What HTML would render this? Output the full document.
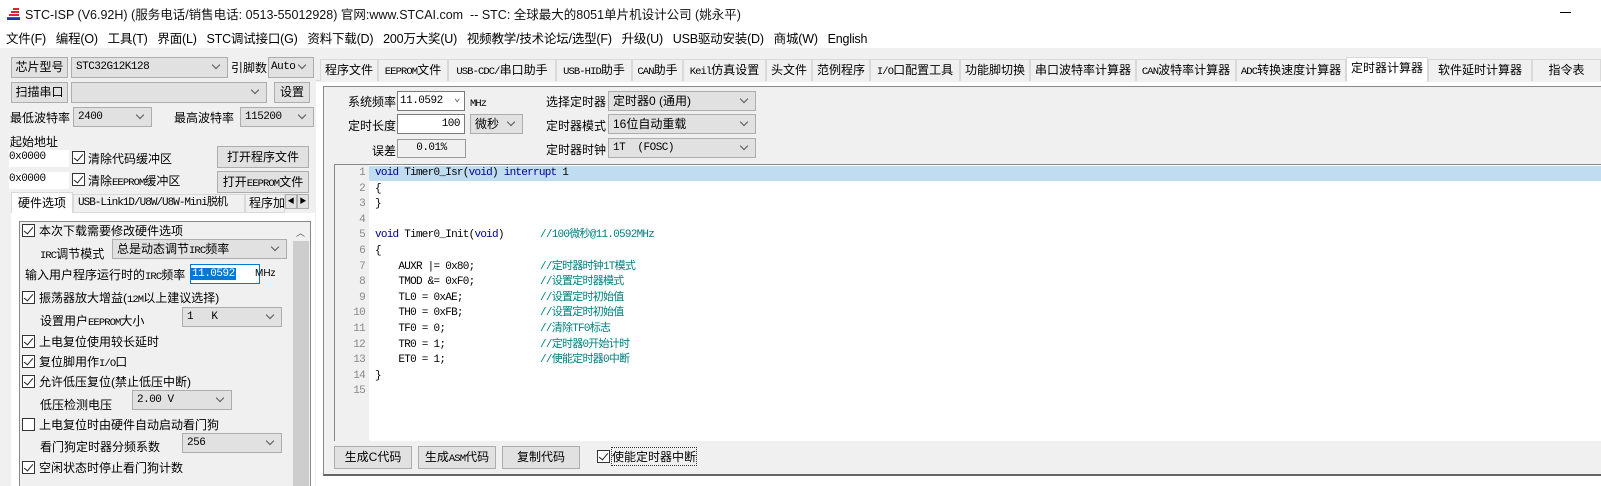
<!DOCTYPE html>
<html><head><meta charset="utf-8"><style>
*{box-sizing:border-box;margin:0;padding:0}
body{width:1601px;height:486px;overflow:hidden;background:#f0f0f0;position:relative;font-family:"Liberation Sans Narrow","Liberation Sans","Noto Sans CJK SC",sans-serif;font-size:12px;color:#000}
.a{position:absolute;white-space:nowrap}
.btn{position:absolute;background:#e1e1e1;border:1px solid #adadad;text-align:center;font-size:12px;white-space:nowrap;overflow:hidden}
.cb{position:absolute;background:#e1e1e1;border:1px solid #adadad;font-size:11px;padding-left:4px;font-family:"Liberation Mono","Noto Sans CJK SC",monospace;letter-spacing:-0.5px;white-space:nowrap}
.cb:after{content:"";position:absolute;right:8px;top:4px;width:5px;height:5px;border-right:1px solid #555;border-bottom:1px solid #555;transform:rotate(45deg)}
.ed{position:absolute;background:#fff;border:1px solid #7a7a7a;font-size:11px;font-family:"Liberation Mono",monospace;letter-spacing:-0.5px}
.chk{position:absolute;width:13px;height:13px;border:1px solid #333;background:#fff}
.chk.on:after{content:"";position:absolute;left:3px;top:0px;width:4px;height:8px;border-right:1.5px solid #222;border-bottom:1.5px solid #222;transform:rotate(40deg)}
.tab{position:absolute;top:59px;height:22px;border:1px solid #d9d9d9;border-bottom:none;background:#f0f0f0;text-align:center;line-height:20px;font-size:12px;white-space:nowrap;overflow:hidden}
.m{font-family:"Liberation Mono",monospace;font-size:10.5px;letter-spacing:-0.9px}
.code{position:absolute;font-family:"Liberation Mono","Noto Sans CJK SC",monospace;font-size:11px;letter-spacing:-0.75px;white-space:pre;line-height:15.6px}
.cm{color:#008080}
.kw{color:#00008b}
</style></head><body>
<div class="a" style="left:0;top:0;width:1601px;height:48px;background:#fff"></div>
<svg class="a" style="left:6px;top:6px" width="16" height="14"><path d="M1 12h13M3 9h10M5 6h8M7 3h6" stroke="#d23" stroke-width="2"/><path d="M1 13h13" stroke="#23a" stroke-width="2"/></svg>
<div class="a" style="left:25px;top:4px;font-size:12.5px;color:#111">STC-ISP (V6.92H) (服务电话/销售电话: 0513-55012928) 官网:www.STCAI.com&nbsp; -- STC: 全球最大的8051单片机设计公司 (姚永平)</div>
<div class="a" style="left:1560px;top:12px;width:11px;height:1px;background:#000"></div>
<div class="a" style="left:6px;top:28px;font-size:12.5px;font-family:'Liberation Sans','Noto Sans CJK SC',sans-serif;letter-spacing:-0.2px">文件(F)&nbsp;&nbsp; 编程(O)&nbsp;&nbsp; 工具(T)&nbsp;&nbsp; 界面(L)&nbsp;&nbsp; STC调试接口(G)&nbsp;&nbsp; 资料下载(D)&nbsp;&nbsp; 200万大奖(U)&nbsp;&nbsp; 视频教学/技术论坛/选型(F)&nbsp;&nbsp; 升级(U)&nbsp;&nbsp; USB驱动安装(D)&nbsp;&nbsp; 商城(W)&nbsp;&nbsp; English</div>

<!-- left panel -->
<div class="btn" style="left:11px;top:57px;width:57px;height:21px;line-height:19px">芯片型号</div>
<div class="cb" style="left:71px;top:57px;width:157px;height:21px;line-height:19px">STC32G12K128</div>
<div class="a" style="left:231px;top:59px">引脚数</div>
<div class="cb" style="left:268px;top:57px;width:46px;height:21px;line-height:19px;padding-left:2px">Auto</div>
<div class="btn" style="left:11px;top:82px;width:57px;height:21px;line-height:19px">扫描串口</div>
<div class="cb" style="left:71px;top:82px;width:196px;height:21px"></div>
<div class="btn" style="left:274px;top:82px;width:36px;height:21px;line-height:19px">设置</div>
<div class="a" style="left:10px;top:109px">最低波特率</div>
<div class="cb" style="left:73px;top:107px;width:79px;height:20px;line-height:18px">2400</div>
<div class="a" style="left:174px;top:109px">最高波特率</div>
<div class="cb" style="left:240px;top:107px;width:74px;height:20px;line-height:18px">115200</div>
<div class="a" style="left:10px;top:133px">起始地址</div>
<div class="ed" style="left:9px;top:150px;width:60px;height:17px;line-height:15px;border:none">0x0000</div>
<div class="chk on" style="left:72px;top:151px"></div>
<div class="a" style="left:88px;top:150px">清除代码缓冲区</div>
<div class="btn" style="left:217px;top:146px;width:92px;height:22px;line-height:20px">打开程序文件</div>
<div class="ed" style="left:9px;top:172px;width:60px;height:17px;line-height:15px;border:none">0x0000</div>
<div class="chk on" style="left:72px;top:173px"></div>
<div class="a" style="left:88px;top:172px">清除<span class="m">EEPROM</span>缓冲区</div>
<div class="btn" style="left:217px;top:171px;width:92px;height:22px;line-height:20px">打开<span class="m">EEPROM</span>文件</div>
<!-- left tabs -->
<div class="a" style="left:11px;top:192px;width:62px;height:22px;background:#fff;border:1px solid #d9d9d9;border-bottom:none;text-align:center;line-height:20px">硬件选项</div>
<div class="a" style="left:73px;top:194px;width:172px;height:19px;border:1px solid #d9d9d9;line-height:17px;font-size:11px;padding-left:4px;font-family:'Liberation Mono','Noto Sans CJK SC',monospace;letter-spacing:-1px">USB-Link1D/U8W/U8W-Mini脱机</div>
<div class="a" style="left:245px;top:194px;width:40px;height:19px;border:1px solid #d9d9d9;line-height:17px;overflow:hidden;padding-left:3px">程序加</div>
<div class="btn" style="left:285px;top:194px;width:12px;height:15px;font-size:7px;line-height:13px">◀</div>
<div class="btn" style="left:297px;top:194px;width:12px;height:15px;font-size:7px;line-height:13px">▶</div>
<div class="a" style="left:11px;top:213px;width:304px;height:273px;background:#fff"></div>
<div class="a" style="left:19px;top:221px;width:292px;height:265px;border:1px solid #888;border-bottom:none;background:#f0f0f0"></div>
<div class="a" style="left:292px;top:222px;width:18px;height:264px;background:#f0f0f0"></div>
<div class="a" style="left:293px;top:241px;width:16px;height:245px;background:#cdcdcd"></div>
<div class="a" style="left:296px;top:226px;font-size:9px;color:#555">︿</div>
<div class="chk on" style="left:22px;top:224px"></div><div class="a" style="left:39px;top:222px">本次下载需要修改硬件选项</div>
<div class="a" style="left:40px;top:245px"><span class="m">IRC</span>调节模式</div>
<div class="cb" style="left:112px;top:239px;width:175px;height:20px;line-height:18px;font-family:'Liberation Sans','Noto Sans CJK SC',sans-serif;font-size:12px;letter-spacing:0">总是动态调节<span class="m">IRC</span>频率</div>
<div class="a" style="left:25px;top:266px">输入用户程序运行时的<span class="m">IRC</span>频率</div>
<div class="ed" style="left:190px;top:264px;width:70px;height:20px;line-height:18px;border-color:#0078d7"><span style="background:#0078d7;color:#fff;padding:0 1px">11.0592</span></div>
<div class="a" style="left:255px;top:268px;font-size:10px">MHz</div>
<div class="chk on" style="left:22px;top:291px"></div><div class="a" style="left:39px;top:289px">振荡器放大增益(<span class="m">12M</span>以上建议选择)</div>
<div class="a" style="left:40px;top:312px">设置用户<span class="m">EEPROM</span>大小</div>
<div class="cb" style="left:182px;top:307px;width:100px;height:20px;line-height:18px">1&nbsp;&nbsp; K</div>
<div class="chk on" style="left:22px;top:335px"></div><div class="a" style="left:39px;top:333px">上电复位使用较长延时</div>
<div class="chk on" style="left:22px;top:355px"></div><div class="a" style="left:39px;top:353px">复位脚用作<span class="m">I/O</span>口</div>
<div class="chk on" style="left:22px;top:375px"></div><div class="a" style="left:39px;top:373px">允许低压复位(禁止低压中断)</div>
<div class="a" style="left:40px;top:396px">低压检测电压</div>
<div class="cb" style="left:132px;top:390px;width:100px;height:20px;line-height:18px">2.00 V</div>
<div class="chk" style="left:22px;top:418px"></div><div class="a" style="left:39px;top:416px">上电复位时由硬件自动启动看门狗</div>
<div class="a" style="left:40px;top:438px">看门狗定时器分频系数</div>
<div class="cb" style="left:182px;top:433px;width:100px;height:20px;line-height:18px">256</div>
<div class="chk on" style="left:22px;top:461px"></div><div class="a" style="left:39px;top:459px">空闲状态时停止看门狗计数</div>

<!-- right tabs -->
<div class="a" style="left:316px;top:80px;width:1285px;height:1px;background:#d9d9d9"></div>
<div class="tab" style="left:320px;width:58px">程序文件</div>
<div class="tab" style="left:378px;width:70px"><span class="m">EEPROM</span>文件</div>
<div class="tab" style="left:448px;width:108px"><span class="m">USB-CDC/</span>串口助手</div>
<div class="tab" style="left:556px;width:76px"><span class="m">USB-HID</span>助手</div>
<div class="tab" style="left:632px;width:51px"><span class="m">CAN</span>助手</div>
<div class="tab" style="left:683px;width:83px"><span class="m">Keil</span>仿真设置</div>
<div class="tab" style="left:766px;width:46px">头文件</div>
<div class="tab" style="left:812px;width:58px">范例程序</div>
<div class="tab" style="left:870px;width:90px"><span class="m">I/O</span>口配置工具</div>
<div class="tab" style="left:960px;width:70px">功能脚切换</div>
<div class="tab" style="left:1030px;width:106px">串口波特率计算器</div>
<div class="tab" style="left:1136px;width:100px"><span class="m">CAN</span>波特率计算器</div>
<div class="tab" style="left:1236px;width:110px"><span class="m">ADC</span>转换速度计算器</div>
<div class="tab" style="left:1346px;top:57px;height:25px;width:82px;background:#fff">定时器计算器</div>
<div class="tab" style="left:1428px;width:104px">软件延时计算器</div>
<div class="tab" style="left:1532px;width:69px">指令表</div>
<div class="a" style="left:316px;top:82px;width:1285px;height:404px;background:#fff"></div>
<div class="a" style="left:323px;top:86px;width:1278px;height:390px;background:#f0f0f0;border-top:1px solid #888;border-left:1px solid #888;border-bottom:2px solid #666"></div>

<div class="a" style="left:348px;top:93px">系统频率</div>
<div class="ed" style="left:397px;top:91px;width:68px;height:20px;line-height:18px;padding-left:2px">11.0592<span style="position:absolute;right:4px;top:-2px;color:#555">⌄</span></div>
<div class="a" style="left:470px;top:95px" ><span class="m">MHz</span></div>
<div class="a" style="left:348px;top:117px">定时长度</div>
<div class="ed" style="left:397px;top:114px;width:68px;height:20px;line-height:18px;text-align:right;padding-right:4px">100</div>
<div class="cb" style="left:470px;top:114px;width:53px;height:20px;line-height:18px;font-family:'Liberation Sans','Noto Sans CJK SC',sans-serif;font-size:12px;letter-spacing:0">微秒</div>
<div class="a" style="left:372px;top:142px">误差</div>
<div class="a" style="left:397px;top:139px;width:69px;height:19px;border:1px solid #999;text-align:center;line-height:17px;font-size:11px;font-family:'Liberation Mono',monospace;letter-spacing:-0.5px">0.01%</div>
<div class="a" style="left:546px;top:93px">选择定时器</div>
<div class="cb" style="left:608px;top:91px;width:148px;height:20px;line-height:18px;font-family:'Liberation Sans','Noto Sans CJK SC',sans-serif;font-size:12px;letter-spacing:0">定时器0 (通用)</div>
<div class="a" style="left:546px;top:117px">定时器模式</div>
<div class="cb" style="left:608px;top:114px;width:148px;height:20px;line-height:18px;font-family:'Liberation Sans','Noto Sans CJK SC',sans-serif;font-size:12px;letter-spacing:0">16位自动重载</div>
<div class="a" style="left:546px;top:141px">定时器时钟</div>
<div class="cb" style="left:608px;top:138px;width:148px;height:20px;line-height:18px">1T&nbsp; (FOSC)</div>

<!-- editor -->
<div class="a" style="left:334px;top:164px;width:1267px;height:277px;background:#fff;border-left:1px solid #888;border-top:1px solid #888"></div>
<div class="a" style="left:335px;top:165px;width:34px;height:276px;background:#f0f0f0"></div>
<div class="a" style="left:369px;top:166px;width:1232px;height:15px;background:#bfdcf0"></div>
<div class="code" style="left:335px;top:166px;width:30px;text-align:right;color:#888">1
2
3
4
5
6
7
8
9
10
11
12
13
14
15</div>
<div class="code" style="left:375px;top:166px"><span class="kw">void</span> Timer0_Isr(<span class="kw">void</span>) <span class="kw">interrupt</span> 1
{
}

<span class="kw">void</span> Timer0_Init(<span class="kw">void</span>)
{
    AUXR |= 0x80;
    TMOD &amp;= 0xF0;
    TL0 = 0xAE;
    TH0 = 0xFB;
    TF0 = 0;
    TR0 = 1;
    ET0 = 1;
}</div>
<div class="code cm" style="left:540px;top:166px">

 
 
//100微秒@11.0592MHz

//定时器时钟1T模式
//设置定时器模式
//设置定时初始值
//设置定时初始值
//清除TF0标志
//定时器0开始计时
//使能定时器0中断</div>

<div class="btn" style="left:334px;top:446px;width:78px;height:23px;line-height:21px">生成C代码</div>
<div class="btn" style="left:418px;top:446px;width:78px;height:23px;line-height:21px">生成<span class="m">ASM</span>代码</div>
<div class="btn" style="left:502px;top:446px;width:78px;height:23px;line-height:21px">复制代码</div>
<div class="chk on" style="left:597px;top:450px"></div>
<div class="a" style="left:612px;top:448px;outline:1px dotted #333">使能定时器中断</div>
</body></html>
